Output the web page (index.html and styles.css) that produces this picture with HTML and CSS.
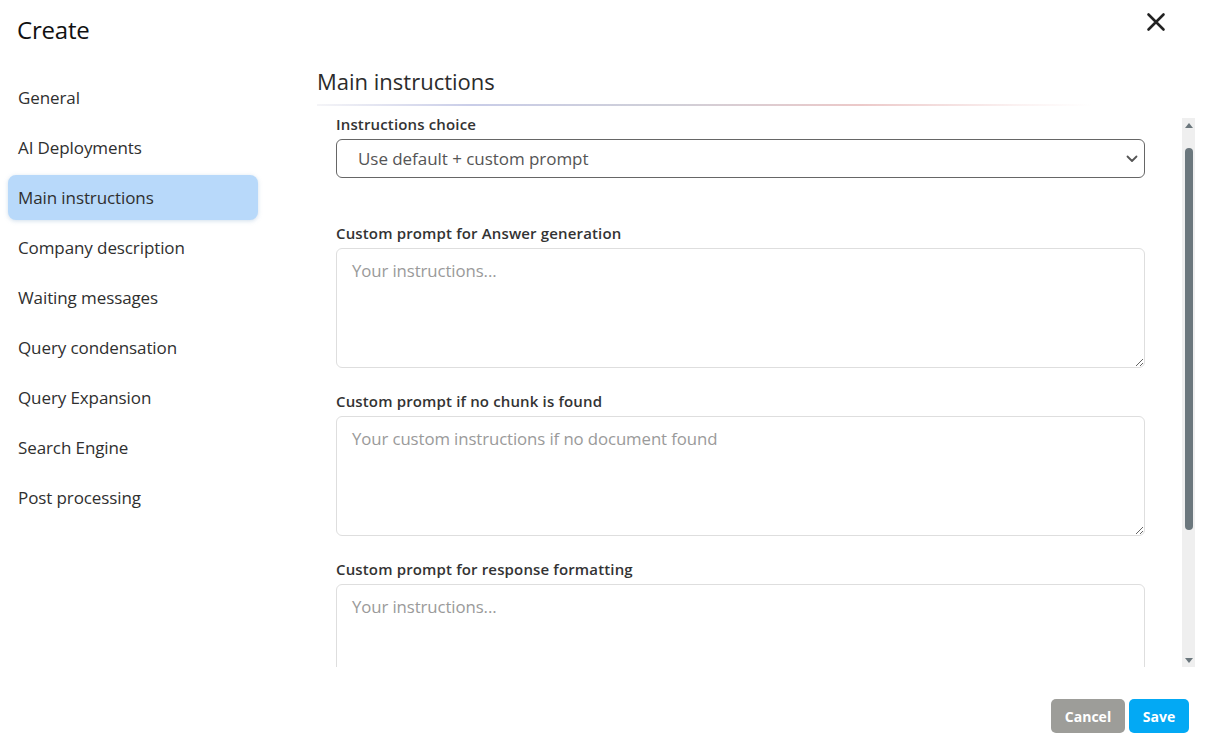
FILE: index.html
```html
<!DOCTYPE html>
<html lang="en">
<head>
<meta charset="utf-8">
<title>Create</title>
<link rel="stylesheet" href="styles.css">
</head>
<body>
<div class="modal">
  <header class="header">
    <h1 class="title">Create</h1>
    <button class="close" aria-label="Close">
      <svg width="20" height="20" viewBox="0 0 20 20"><path d="M2.5 2.5 L17.5 17.5 M17.5 2.5 L2.5 17.5" stroke="#222" stroke-width="2.6" stroke-linecap="round" fill="none"/></svg>
    </button>
  </header>
  <div class="body">
    <nav class="sidebar">
      <div class="nav-item">General</div>
      <div class="nav-item">AI Deployments</div>
      <div class="nav-item active">Main instructions</div>
      <div class="nav-item">Company description</div>
      <div class="nav-item">Waiting messages</div>
      <div class="nav-item">Query condensation</div>
      <div class="nav-item">Query Expansion</div>
      <div class="nav-item">Search Engine</div>
      <div class="nav-item">Post processing</div>
    </nav>
    <main class="main">
      <h2 class="section-title">Main instructions</h2>
      <div class="divider"></div>
      <div class="scroll-wrap">
        <div class="scroll-view">
          <div class="scroll-content">
            <div class="field field-select">
              <label class="label">Instructions choice</label>
              <div class="select">
                <span class="select-value">Use default + custom prompt</span>
                <svg class="chevron" width="12" height="8" viewBox="0 0 12 8"><path d="M1.5 1.5 L6 6 L10.5 1.5" stroke="#555" stroke-width="1.8" fill="none" stroke-linecap="round" stroke-linejoin="round"/></svg>
              </div>
            </div>
            <div class="field">
              <label class="label">Custom prompt for Answer generation</label>
              <textarea class="textarea" placeholder="Your instructions..."></textarea>
            </div>
            <div class="field">
              <label class="label">Custom prompt if no chunk is found</label>
              <textarea class="textarea" placeholder="Your custom instructions if no document found"></textarea>
            </div>
            <div class="field">
              <label class="label">Custom prompt for response formatting</label>
              <textarea class="textarea" placeholder="Your instructions..."></textarea>
            </div>
          </div>
        </div>
        <div class="scrollbar">
          <span class="arrow-up"></span>
          <div class="thumb-track"><div class="thumb"></div></div>
          <span class="arrow-down"></span>
        </div>
      </div>
    </main>
  </div>
  <footer class="footer">
    <button class="btn btn-cancel">Cancel</button>
    <button class="btn btn-save">Save</button>
  </footer>
</div>
</body>
</html>
```

FILE: styles.css
```css
* { box-sizing: border-box; }
html, body { margin: 0; padding: 0; background: #fff; }
body {
  font-family: "Open Sans", "Noto Sans", sans-serif;
  color: #2b2b2b;
  width: 1214px;
  height: 747px;
  overflow: hidden;
}
.modal {
  display: flex;
  flex-direction: column;
  height: 747px;
}
.header {
  height: 60px;
  display: flex;
  align-items: flex-start;
  justify-content: space-between;
  padding: 0 48px 0 17px;
}
.title {
  margin: 14px 0 0 0;
  font-size: 24px;
  line-height: 32px;
  font-weight: 500;
  color: #111;
  letter-spacing: -0.2px;
}
.close {
  margin-top: 12px;
  border: 0;
  background: transparent;
  padding: 0;
  width: 20px;
  height: 20px;
  cursor: pointer;
}
.body {
  flex: 1;
  display: flex;
  min-height: 0;
}
.sidebar {
  width: 300px;
  flex: none;
  padding: 15px 42px 0 8px;
  display: flex;
  flex-direction: column;
  gap: 5px;
}
.nav-item {
  height: 45px;
  display: flex;
  align-items: center;
  padding-left: 10px;
  font-size: 17px;
  font-weight: 500;
  color: #2f2f2f;
  border-radius: 8px;
  letter-spacing: -0.1px;
}
.nav-item.active {
  background: #b8d9fa;
  box-shadow: 0 1px 4px rgba(120, 160, 200, 0.35);
}
.main {
  flex: 1;
  min-width: 0;
  display: flex;
  flex-direction: column;
  padding: 0 19px 0 17px;
}
.section-title {
  margin: 8px 0 0 0;
  font-size: 22px;
  line-height: 26px;
  font-weight: 500;
  color: #2b2b2b;
  letter-spacing: 0;
}
.divider {
  margin-top: 10px;
  height: 2px;
  width: 775px;
  background: linear-gradient(90deg, rgba(220,220,230,0.3) 0%, #c9cde8 20%, #cfcfd8 45%, #ecc9c9 70%, rgba(245,220,220,0.4) 90%, rgba(255,255,255,0) 100%);
}
.scroll-wrap {
  margin-top: 12px;
  height: 549px;
  display: flex;
}
.scroll-view {
  flex: 1;
  overflow: hidden;
  padding: 0 37px 0 19px;
}
.scroll-content {
  margin-top: -4px;
}
.field {
  display: flex;
  flex-direction: column;
  gap: 5px;
  margin-bottom: 23px;
}
.field-select {
  margin-bottom: 45px;
}
.label {
  font-size: 15px;
  line-height: 20px;
  font-weight: 600;
  color: #333;
  letter-spacing: 0.15px;
}
.select {
  height: 39px;
  border: 1px solid #666;
  border-radius: 6px;
  display: flex;
  align-items: center;
  justify-content: space-between;
  padding: 0 6px 0 21px;
}
.select-value {
  font-size: 17px;
  color: #555;
  letter-spacing: -0.05px;
}
.chevron { margin-top: 1px; }
.textarea {
  height: 120px;
  border: 1px solid #dedede;
  border-radius: 6px;
  padding: 11px 15px;
  font-family: "Open Sans", "Noto Sans", sans-serif;
  font-size: 16.8px;
  line-height: 22px;
  color: #333;
  resize: vertical;
  outline: none;
  letter-spacing: -0.1px;
}
.textarea::placeholder { color: #9a9a9a; }
.scrollbar {
  width: 13px;
  flex: none;
  background: #efefef;
  display: flex;
  flex-direction: column;
  align-items: center;
}
.arrow-up, .arrow-down {
  width: 0;
  height: 0;
  border-left: 4px solid transparent;
  border-right: 4px solid transparent;
}
.arrow-up {
  margin-top: 5px;
  border-bottom: 5px solid #6b777d;
}
.arrow-down {
  margin-bottom: 4px;
  border-top: 5px solid #6b777d;
}
.thumb-track {
  flex: 1;
  width: 100%;
  display: flex;
  justify-content: center;
  padding-top: 20px;
}
.thumb {
  width: 8px;
  height: 382px;
  background: #6b777d;
  border-radius: 4px;
}
.footer {
  height: 80px;
  flex: none;
  display: flex;
  justify-content: flex-end;
  align-items: flex-start;
  gap: 4px;
  padding: 32px 25px 0 0;
}
.btn {
  height: 34px;
  border: 0;
  border-radius: 5px;
  color: #fff;
  font-family: "Open Sans", "Noto Sans", sans-serif;
  font-size: 14px;
  font-weight: 700;
  padding: 0 10px;
  cursor: pointer;
}
.btn-cancel { background: #9d9d99; width: 74px; }
.btn-save { background: #03a9f4; width: 60px; }
```
